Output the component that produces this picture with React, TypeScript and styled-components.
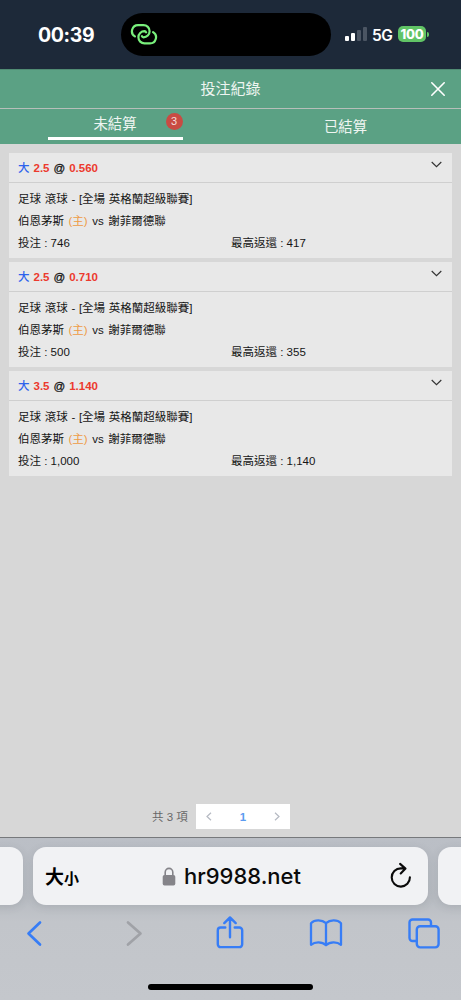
import React from 'react';
import styled, { createGlobalStyle } from 'styled-components';

const GlobalStyle = createGlobalStyle`
  * { box-sizing: border-box; }
  body { margin: 0; font-family: "Liberation Sans", "Noto Sans CJK TC", sans-serif; }
`;

const Screen = styled.div`
  width: 461px;
  height: 1000px;
  display: flex;
  flex-direction: column;
  background: #d7d7d7;
  overflow: hidden;
`;

const StatusBar = styled.header`
  height: 69px;
  flex: none;
  display: flex;
  align-items: flex-start;
  background: #1d2939;
  color: #fff;
  font-family: Inter, sans-serif;
`;

const Clock = styled.div`
  width: 121px;
  padding: 22px 0 0 38px;
  font-size: 19.5px;
  line-height: 26px;
  font-weight: 700;
  letter-spacing: -0.35px;
  white-space: nowrap;
`;

const Island = styled.div`
  width: 210px;
  height: 43px;
  margin-top: 13px;
  border-radius: 22px;
  background: #000;
  padding: 10px 0 0 9px;
  svg { display: block; }
`;

const Indicators = styled.div`
  height: 26px;
  margin: 22px 0 0 14px;
  display: flex;
  align-items: center;
`;

const Signal = styled.div`
  display: flex;
  align-items: flex-end;
  gap: 2px;
  height: 14px;
  margin-top: -2px;
`;

const Bar = styled.i<{ $h: number; $off?: boolean }>`
  width: 4px;
  height: ${p => p.$h}px;
  border-radius: 1px;
  background: ${p => (p.$off ? '#4b5563' : '#fff')};
`;

const Network = styled.span`
  width: 26px;
  margin-left: 5px;
  font-size: 15.5px;
  font-weight: 600;
  letter-spacing: -0.4px;
`;

const Battery = styled.span`
  width: 28px;
  height: 16px;
  border-radius: 5px;
  background: #61c466;
  font-size: 13px;
  line-height: 16px;
  font-weight: 800;
  letter-spacing: -0.2px;
  text-align: center;
  margin-top: -2px;
`;

const BatteryTip = styled.i`
  width: 2px;
  height: 5px;
  margin: -2px 0 0 1px;
  border-radius: 0 2px 2px 0;
  background: #61c466;
`;

const TitleBar = styled.div`
  height: 40px;
  flex: none;
  display: grid;
  grid-template-columns: 46px 1fr 46px;
  align-items: center;
  background: #5ba184;
  border-top: 1px solid #508b73;
  border-bottom: 1px solid #b7bfba;
  color: #eef5f1;
  svg { display: block; margin: -1px 0 0 15px; }
`;

const Title = styled.h1`
  grid-column: 2;
  margin: 0;
  text-align: center;
  font-size: 15px;
  line-height: 20px;
  font-weight: 400;
`;

const Tabs = styled.nav`
  height: 35px;
  flex: none;
  display: grid;
  grid-template-columns: 1fr 1fr;
  background: #5ba184;
`;

const Tab = styled.div<{ $active?: boolean }>`
  position: relative;
  width: ${p => (p.$active ? 135 : 231)}px;
  height: ${p => (p.$active ? 31 : 35)}px;
  justify-self: center;
  border-bottom: ${p => (p.$active ? '3px solid #fff' : '0')};
  color: #eef5f1;
  font-size: 14.4px;
  line-height: ${p => (p.$active ? 31 : 36)}px;
  text-align: center;
`;

const Badge = styled.span`
  position: absolute;
  right: 0;
  top: 4px;
  width: 17px;
  height: 17px;
  border-radius: 50%;
  background: #c94b43;
  color: #f5dedb;
  font-size: 11px;
  line-height: 17px;
`;

const List = styled.main`
  flex: 1;
  min-height: 0;
  padding: 9px 9px 8px;
  display: flex;
  flex-direction: column;
  gap: 4px;
`;

const Card = styled.article`
  height: 105px;
  flex: none;
  background: #e8e8e8;
  color: #151515;
  font-size: 11.5px;
`;

const CardHead = styled.div`
  height: 30px;
  display: flex;
  align-items: center;
  justify-content: space-between;
  padding: 0 9px;
  border-bottom: 1px solid #cfcfcf;
  svg { display: block; margin: -7px 1px 0 0; }
`;

const Pick = styled.div`
  display: flex;
  gap: 4px;
  line-height: 16px;
`;

const PickSide = styled.span`
  color: #2d63ec;
  font-weight: 500;
`;

const Odds = styled.b`
  color: #ec3a2e;
`;

const At = styled.span`
  font-weight: 400;
  -webkit-text-stroke: 0.3px #151515;
`;

const CardBody = styled.div`
  padding: 5px 9px 0;
`;

const Line = styled.div<{ $space?: number }>`
  height: 22px;
  display: grid;
  grid-template-columns: 213px 1fr;
  line-height: 22px;
  white-space: pre;
  word-spacing: ${p => p.$space ?? 0}px;
`;

const Wide = styled.span`
  grid-column: 1 / 3;
`;

const Home = styled.span`
  color: #ee9a45;
`;

const Pager = styled.footer`
  height: 25px;
  margin-top: auto;
  display: flex;
  align-items: center;
  padding-left: 143px;
  color: #686868;
  font-size: 11.5px;
`;

const Total = styled.span`
  width: 44px;
  margin-top: -2px;
  white-space: nowrap;
`;

const Pages = styled.div`
  width: 94px;
  height: 25px;
  display: grid;
  grid-template-columns: 25px 1fr 27px;
  align-items: center;
  justify-items: center;
  background: #fff;
`;

const PageNumber = styled.b`
  padding-left: 2px;
  color: #5b9bf0;
  font-size: 11.5px;
`;

const Browser = styled.section`
  height: 163px;
  flex: none;
  border-top: 1px solid #77797c;
  background: linear-gradient(#bbbfc6, #b8bcc2 60px, #c2c5ca 84px, #c4c7cc);
`;

const AddressRow = styled.div`
  width: 511px;
  height: 58px;
  margin: 9px 0 0 -25px;
  display: flex;
  gap: 10px;
`;

const Pill = styled.div<{ $w: number }>`
  width: ${p => p.$w}px;
  height: 58px;
  flex: none;
  display: flex;
  align-items: center;
  border-radius: 13px;
  background: #f1f2f4;
  box-shadow: 0 2px 8px rgba(70, 75, 85, 0.14);
`;

const TextSize = styled.div`
  width: 129px;
  padding: 2px 0 0 12px;
  display: flex;
  align-items: baseline;
  font-family: "Noto Sans CJK TC", sans-serif;
  font-weight: 700;
  font-size: 19px;
  line-height: 28px;
`;

const SmallGlyph = styled.span`
  font-size: 15px;
`;

const Host = styled.div`
  width: 214px;
  padding-left: 8px;
  color: #0a0a0a;
  font-family: Inter, sans-serif;
  font-size: 22px;
  line-height: 28px;
  font-weight: 500;
  letter-spacing: 0;
`;

const Reload = styled.div`
  padding-bottom: 3px;
  svg { display: block; }
`;

const Toolbar = styled.div`
  height: 56px;
  display: grid;
  grid-template-columns: 67px 134px 57px 136px 59px;
  align-items: center;
  justify-items: center;
  svg { display: block; }
`;

const HomeIndicator = styled.div`
  width: 165px;
  height: 6px;
  margin: 23px auto 0;
  border-radius: 3px;
  background: #000;
`;

const LinkIcon = () => (
  <svg width="28" height="23" viewBox="0 0 28 23" fill="none" stroke="#79f07c" strokeWidth="2.2" strokeLinecap="round">
    <path d="M4.9 13.4A6.1 6.1 0 0 1 8.2 2.1H13.5A6.1 6.1 0 0 1 13.5 14.3Q12.3 14.2 11.9 13.2" />
    <path d="M23.1 9.1A6.1 6.1 0 0 1 19.8 20.4H14.5A6.1 6.1 0 0 1 14.5 8.2Q15.7 8.3 16.1 9.3" />
  </svg>
);

const CloseIcon = () => (
  <svg width="16" height="16" viewBox="0 0 16 16" stroke="#fff" strokeWidth="1.6" strokeLinecap="round">
    <path d="M1.8 1.8 14.2 14.2M14.2 1.8 1.8 14.2" />
  </svg>
);

const DownIcon = () => (
  <svg width="11" height="7" viewBox="0 0 11 7" fill="none" stroke="#333" strokeWidth="1.15">
    <path d="M.7 1 5.5 5.7 10.3 1" />
  </svg>
);

const PageArrow = ({ next }: { next?: boolean }) => (
  <svg width="6" height="9" viewBox="0 0 6 9" fill="none" stroke="#b5b9c2" strokeWidth="1.2">
    <path d={next ? 'M1 .7 5 4.5 1 8.3' : 'M5 .7 1 4.5 5 8.3'} />
  </svg>
);

const LockIcon = () => (
  <svg width="14" height="19" viewBox="0 0 14 19">
    <rect x=".7" y="8" width="12.6" height="10.5" rx="1.8" fill="#858489" />
    <path d="M3.2 8.5V5.2a3.8 3.8 0 0 1 7.6 0V8.5" fill="none" stroke="#858489" strokeWidth="1.6" />
  </svg>
);

const ReloadIcon = () => (
  <svg width="22" height="26" viewBox="0 0 22 26" fill="none" stroke="#0a0a0a" strokeWidth="2.1" strokeLinecap="round" strokeLinejoin="round">
    <path d="M19.9 15.3A9.1 9.1 0 1 1 10.8 6.4H15.2M10.1 1.9 15.5 6.6 10.7 11.5" />
  </svg>
);

const BackIcon = ({ forward }: { forward?: boolean }) => (
  <svg width="18" height="27" viewBox="0 0 18 27" fill="none" stroke={forward ? '#a0a2a7' : '#377df6'} strokeWidth="2.7" strokeLinecap="round" strokeLinejoin="round">
    <path d={forward ? 'M3 2.5 15.5 13.5 3 24.5' : 'M15 2.5 3.5 13.5 15 24.5'} />
  </svg>
);

const ShareIcon = () => (
  <svg width="28" height="34" viewBox="0 0 28 34" fill="none" stroke="#377df6" strokeWidth="2.4" strokeLinecap="round" strokeLinejoin="round">
    <path d="M9.3 11.5H4.6A2.8 2.8 0 0 0 1.8 14.3V28.3A2.8 2.8 0 0 0 4.6 31.1H23.4A2.8 2.8 0 0 0 26.2 28.3V14.3A2.8 2.8 0 0 0 23.4 11.5H18.7M14 21.2V1.6M8.3 7.1 14 1.4 19.7 7.1" />
  </svg>
);

const BookIcon = () => (
  <svg width="34" height="28" viewBox="0 0 34 28" fill="none" stroke="#377df6" strokeWidth="2.3" strokeLinejoin="round">
    <path d="M17 4.2C13 .7 5.8.4 2 4.2V25.8C6 22.5 13 22.5 17 26.2 21 22.5 28 22.5 32 25.8V4.2C28.2.4 21 .7 17 4.2ZM17 4.2V26" />
  </svg>
);

const TabsIcon = () => (
  <svg width="32" height="31" viewBox="0 0 32 31" fill="none" stroke="#377df6" strokeWidth="2.4" strokeLinecap="round">
    <rect x="8.8" y="8.2" width="21.8" height="21.2" rx="3.3" />
    <path d="M8.2 23H4.5A3 3 0 0 1 1.5 20V4.5A3 3 0 0 1 4.5 1.5H20A3 3 0 0 1 23 4.5V7.5" />
  </svg>
);

const bets = [
  { line: '2.5', odds: '0.560', stake: '746', payout: '417' },
  { line: '2.5', odds: '0.710', stake: '500', payout: '355' },
  { line: '3.5', odds: '1.140', stake: '1,000', payout: '1,140' },
];

export default function App() {
  return (
    <Screen>
      <GlobalStyle />
      <StatusBar>
        <Clock>00:39</Clock>
        <Island><LinkIcon /></Island>
        <Indicators>
          <Signal><Bar $h={5} /><Bar $h={8} /><Bar $h={11} $off /><Bar $h={14} $off /></Signal>
          <Network>5G</Network>
          <Battery>100</Battery>
          <BatteryTip />
        </Indicators>
      </StatusBar>
      <TitleBar>
        <Title>投注紀錄</Title>
        <CloseIcon />
      </TitleBar>
      <Tabs>
        <Tab $active>未結算<Badge>3</Badge></Tab>
        <Tab>已結算</Tab>
      </Tabs>
      <List>
        {bets.map(bet => (
          <Card key={bet.odds}>
            <CardHead>
              <Pick>
                <PickSide>大</PickSide>
                <Odds>{bet.line}</Odds>
                <At>@</At>
                <Odds>{bet.odds}</Odds>
              </Pick>
              <DownIcon />
            </CardHead>
            <CardBody>
              <Line $space={0.5}><Wide>足球 滾球 - [全場 英格蘭超級聯賽]</Wide></Line>
              <Line $space={1.3}><Wide>伯恩茅斯 <Home>(主)</Home> vs 謝菲爾德聯</Wide></Line>
              <Line><span>投注 : {bet.stake}</span><span>最高返還 : {bet.payout}</span></Line>
            </CardBody>
          </Card>
        ))}
        <Pager>
          <Total>共 3 項</Total>
          <Pages><PageArrow /><PageNumber>1</PageNumber><PageArrow next /></Pages>
        </Pager>
      </List>
      <Browser>
        <AddressRow>
          <Pill $w={48} />
          <Pill $w={395}>
            <TextSize>大<SmallGlyph>小</SmallGlyph></TextSize>
            <LockIcon />
            <Host>hr9988.net</Host>
            <Reload><ReloadIcon /></Reload>
          </Pill>
          <Pill $w={48} />
        </AddressRow>
        <Toolbar>
          <BackIcon />
          <BackIcon forward />
          <ShareIcon />
          <BookIcon />
          <TabsIcon />
        </Toolbar>
        <HomeIndicator />
      </Browser>
    </Screen>
  );
}
